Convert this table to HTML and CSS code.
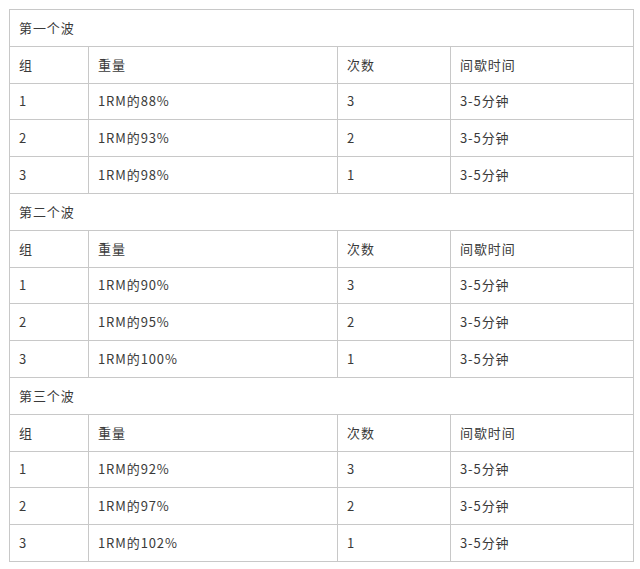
FILE: index.html
```html
<!DOCTYPE html>
<html lang="zh">
<head>
<meta charset="utf-8">
<link rel="stylesheet" href="styles.css">
</head>
<body>
<table class="plan">
  <colgroup>
    <col class="c1"><col class="c2"><col class="c3"><col class="c4">
  </colgroup>
  <tbody>
    <tr><td colspan="4">第一个波</td></tr>
    <tr><td>组</td><td>重量</td><td>次数</td><td>间歇时间</td></tr>
    <tr><td>1</td><td>1RM的88%</td><td>3</td><td>3-5分钟</td></tr>
    <tr><td>2</td><td>1RM的93%</td><td>2</td><td>3-5分钟</td></tr>
    <tr><td>3</td><td>1RM的98%</td><td>1</td><td>3-5分钟</td></tr>
    <tr><td colspan="4">第二个波</td></tr>
    <tr><td>组</td><td>重量</td><td>次数</td><td>间歇时间</td></tr>
    <tr><td>1</td><td>1RM的90%</td><td>3</td><td>3-5分钟</td></tr>
    <tr><td>2</td><td>1RM的95%</td><td>2</td><td>3-5分钟</td></tr>
    <tr><td>3</td><td>1RM的100%</td><td>1</td><td>3-5分钟</td></tr>
    <tr><td colspan="4">第三个波</td></tr>
    <tr><td>组</td><td>重量</td><td>次数</td><td>间歇时间</td></tr>
    <tr><td>1</td><td>1RM的92%</td><td>3</td><td>3-5分钟</td></tr>
    <tr><td>2</td><td>1RM的97%</td><td>2</td><td>3-5分钟</td></tr>
    <tr><td>3</td><td>1RM的102%</td><td>1</td><td>3-5分钟</td></tr>
  </tbody>
</table>
</body>
</html>
```
FILE: styles.css
```css
html, body {
  margin: 0;
  background: #fff;
}
body {
  padding: 9px 0 0 9px;
  font-family: "Noto Sans CJK SC", "Noto Sans", sans-serif;
  font-size: 13px;
  color: #3a3a3a;
}
.plan {
  border-collapse: collapse;
  table-layout: fixed;
  width: 624px;
}
.c1 { width: 79px; }
.c2 { width: 249px; }
.c3 { width: 113px; }
.c4 { width: 183px; }
.plan td {
  border: 1px solid #c8c8c8;
  height: 36.8px;
  padding: 0 9px;
  box-sizing: border-box;
  vertical-align: middle;
  letter-spacing: 0.9px;
  line-height: 18px;
}
```
